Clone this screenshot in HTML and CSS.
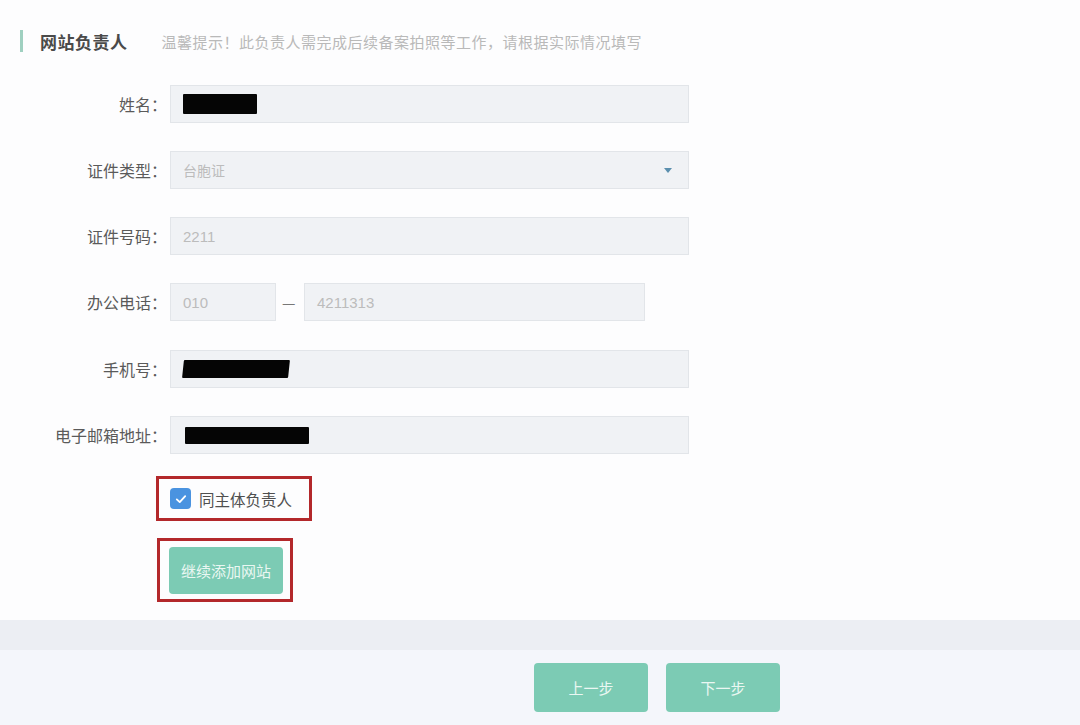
FILE: index.html
```html
<!DOCTYPE html>
<html lang="zh-CN">
<head>
<meta charset="utf-8">
<title>网站负责人</title>
<link rel="stylesheet" href="styles.css">
</head>
<body>
<div class="page">
  <div class="head">
    <span class="bar"></span>
    <span class="title">网站负责人</span>
    <span class="hint">温馨提示！此负责人需完成后续备案拍照等工作，请根据实际情况填写</span>
  </div>
  <div class="form">
    <div class="row">
      <label class="lbl">姓名：</label>
      <div class="field"><span class="redact r-name"></span></div>
    </div>
    <div class="row">
      <label class="lbl">证件类型：</label>
      <div class="field select"><span class="val">台胞证</span><span class="caret"></span></div>
    </div>
    <div class="row">
      <label class="lbl">证件号码：</label>
      <div class="field"><span class="val">2211</span></div>
    </div>
    <div class="row">
      <label class="lbl">办公电话：</label>
      <div class="field area"><span class="val">010</span></div>
      <span class="dash">—</span>
      <div class="field tel"><span class="val">4211313</span></div>
    </div>
    <div class="row">
      <label class="lbl">手机号：</label>
      <div class="field"><span class="redact r-mobile"></span></div>
    </div>
    <div class="row">
      <label class="lbl">电子邮箱地址：</label>
      <div class="field"><span class="redact r-email"></span></div>
    </div>
    <div class="check-row">
      <div class="mark-box check-box">
        <span class="cb"><svg viewBox="0 0 20 20" width="14" height="14"><path d="M4 10.5 L8.2 14.5 L16 6" fill="none" stroke="#fff" stroke-width="2.6" stroke-linecap="round" stroke-linejoin="round"/></svg></span>
        <span class="cb-text">同主体负责人</span>
      </div>
    </div>
    <div class="check-row btn-row">
      <div class="mark-box add-box">
        <button class="btn add">继续添加网站</button>
      </div>
    </div>
  </div>
</div>
<div class="band"></div>
<div class="footer">
  <button class="btn step">上一步</button>
  <button class="btn step">下一步</button>
</div>
</body>
</html>
```
FILE: styles.css
```css
* { box-sizing: border-box; }
html, body { margin: 0; padding: 0; }
body {
  width: 1080px;
  height: 725px;
  overflow: hidden;
  background: #ffffff;
  font-family: "Noto Sans CJK SC", "Noto Sans", sans-serif;
  color: #555;
}
.page {
  height: 620px;
  padding-top: 30px;
  background: #fdfdfe;
}
.head {
  display: flex;
  align-items: center;
  height: 22px;
  padding-left: 20px;
}
.bar {
  width: 3px;
  height: 22px;
  background: #9fd0c0;
  margin-right: 17px;
}
.title {
  font-size: 17px;
  font-weight: bold;
  color: #4a4a4a;
  letter-spacing: 0.5px;
}
.hint {
  margin-left: 34px;
  font-size: 15px;
  color: #b9b9b9;
  letter-spacing: 0.5px;
}
.form {
  margin-top: 33px;
}
.row {
  display: flex;
  align-items: center;
  height: 38px;
  margin-bottom: 28px;
}
.row:nth-child(4) { margin-bottom: 29px; }
.lbl {
  width: 167px;
  text-align: right;
  font-size: 16px;
  color: #5a5a5a;
}
.field {
  margin-left: 3px;
  width: 519px;
  height: 38px;
  background: #f0f2f5;
  border: 1px solid #e2e5e9;
  display: flex;
  align-items: center;
  padding-left: 12px;
  position: relative;
}
.val {
  font-size: 15px;
  color: #bcbcbc;
  font-family: "Liberation Sans", "Noto Sans CJK SC", sans-serif;
}
.select .val { font-family: "Noto Sans CJK SC", sans-serif; font-size: 14px; }
.caret {
  position: absolute;
  right: 16px;
  top: 16px;
  width: 0;
  height: 0;
  border-left: 4px solid transparent;
  border-right: 4px solid transparent;
  border-top: 5px solid #5b8fae;
}
.field.area { width: 106px; }
.field.tel { width: 341px; margin-left: 6px; }
.dash {
  margin-left: 6px;
  font-size: 15px;
  color: #777;
  width: 16px;
}
.redact {
  display: block;
  background: #050505;
  border-radius: 1px;
}
.r-name { width: 74px; height: 20px; }
.r-mobile { width: 106px; height: 18px; transform: skewX(-6deg); }
.r-email { width: 124px; height: 17px; margin-left: 2px; }
.check-row {
  display: flex;
  padding-left: 156px;
  margin-top: -6px;
}
.mark-box {
  border: 3px solid #b3282b;
  display: flex;
  align-items: center;
}
.check-box {
  width: 156px;
  height: 45px;
  padding-left: 11px;
}
.cb {
  width: 21px;
  height: 21px;
  border-radius: 4px;
  background: #4a93e0;
  display: flex;
  align-items: center;
  justify-content: center;
}
.cb-text {
  margin-left: 8px;
  font-size: 15.5px;
  color: #4f4f4f;
}
.btn-row {
  margin-top: 17px;
  padding-left: 157px;
}
.add-box {
  width: 136px;
  height: 64px;
  padding-left: 9px;
}
.btn {
  border: none;
  border-radius: 4px;
  background: #7ccbb4;
  color: #eaf7f2;
  font-family: "Noto Sans CJK SC", sans-serif;
  font-size: 15px;
  padding: 0;
}
.add {
  width: 114px;
  height: 47px;
}
.band {
  height: 30px;
  background: #eceef3;
}
.footer {
  height: 75px;
  background: #f4f6fb;
  display: flex;
  align-items: flex-start;
  padding-top: 13px;
  padding-left: 534px;
  gap: 18px;
}
.step {
  width: 114px;
  height: 49px;
}
```
